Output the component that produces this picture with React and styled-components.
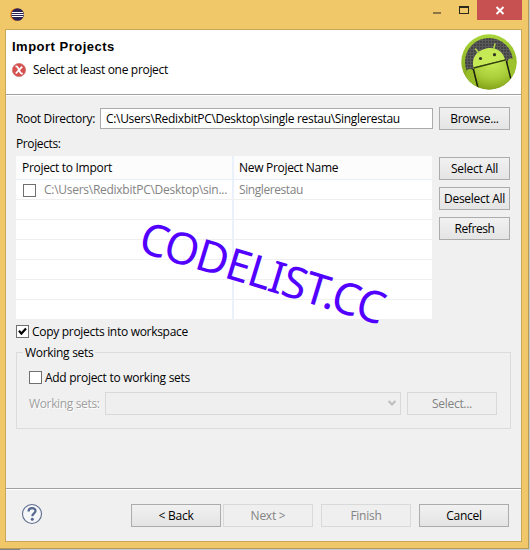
import React from "react";
import styled, { createGlobalStyle } from "styled-components";

const Global = createGlobalStyle`
  *, *::before, *::after { box-sizing: border-box; }
  body { margin: 0; overflow: hidden; font: 12px/16px "Open Sans", "Noto Sans", sans-serif; color: #000; }
`;

const Desktop = styled.div`
  width: 530px; height: 550px; padding: 0 1px 1px 0;
  background: linear-gradient(90deg, #858585 20px, #c3cdd0 20px);
`;
const Window = styled.div`
  position: relative; width: 529px; height: 549px;
  background: #f0c869; border: solid #b69a55; border-width: 0 1px 1px 0;
  padding: 0 6px 6px 5px;
`;
const TitleBar = styled.div`
  height: 29px; display: flex; align-items: flex-start;
`;
const AppIcon = styled.svg`
  width: 14px; height: 14px; margin: 8px 0 0 5px; flex: none;
`;
const WindowControls = styled.div`
  display: flex; margin-left: auto; height: 20px;
`;
const Control = styled.div`
  width: ${p => p.$w}px; height: 20px; background: ${p => p.$bg || "transparent"};
  svg { display: block; width: 100%; height: 100%; }
`;
const Client = styled.div`
  width: 517px; height: 513px; border: 1px solid #c9a757; background: #f0f0f0;
  display: flex; flex-direction: column;
`;
const Header = styled.header`
  height: 66px; flex: none; background: #fff; border-bottom: 1px solid #fff;
  box-shadow: inset 0 -1px #a0a0a0; display: flex; justify-content: space-between;
  padding: 8px 4px 0 6px;
`;
const Title = styled.h1`
  margin: 0; padding-top: 1px;
  font: bold 13px/16px "Liberation Sans", Arial, sans-serif; letter-spacing: ${p => p.$ls}px;
`;
const Message = styled.div`
  display: flex; align-items: center; gap: 7px; margin-top: 7px;
  svg { width: 14px; height: 14px; }
`;
const Robot = styled.svg`
  width: 56px; height: 56px; margin-top: -4px;
`;
const Text = styled.span`
  white-space: pre; letter-spacing: ${p => p.$ls || 0}px; color: ${p => p.$color || "inherit"};
  text-shadow: ${p => (p.$etched ? "1px 1px #fff" : "none")};
`;
const Body = styled.main`
  flex: 1; padding: 11px 10px 0;
`;
const DirectoryRow = styled.div`
  display: grid; grid-template-columns: 84px 333px 71px; column-gap: 0; align-items: center; height: 23px;
  & > :last-child { margin-left: 6px; }
`;
const Field = styled.div`
  height: 21px; background: #fff; border: 1px solid #ababab; padding: 2px 5px 0; line-height: 16px;
  white-space: nowrap; overflow: hidden;
`;
const Button = styled.button`
  width: ${p => p.$w || 71}px; height: 23px; padding: 0; margin: 0; font: inherit; line-height: 20px;
  display: flex; align-items: center; justify-content: center; flex: none;
  border: 1px solid #acacac; background: linear-gradient(#f1f1f1, #e4e4e4); color: #000;
  &:disabled { border-color: #d9d9d9; background: #efefef; color: #838383; }
`;
const ProjectsLabel = styled.div`
  height: 26px; padding-top: 6px;
`;
const ProjectsArea = styled.div`
  display: flex; gap: 7px;
`;
const ButtonColumn = styled.div`
  display: flex; flex-direction: column; gap: 7px; padding-top: 1px;
`;
const Table = styled.div`
  width: 416px; height: 163px; background: #fff; overflow: hidden;
`;
const TableRow = styled.div`
  display: grid; grid-template-columns: 218px 198px; height: ${p => (p.$head ? 24 : 20)}px;
  background: ${p => (p.$head ? "#fcfcfc" : "#fff")};
  border-bottom: 1px solid ${p => (p.$head ? "#e9effa" : p.$last ? "#fff" : "#efefef")};
`;
const Cell = styled.div`
  display: flex; align-items: center; height: 100%; padding-left: ${p => p.$pad}px; white-space: nowrap;
  border-right: ${p => (p.$divider ? "2px solid #ebf1fb" : "0")};
`;
const ProjectCell = styled(Cell)`
  gap: 8px; padding-top: 1px;
`;
const Box = styled.span`
  width: 13px; height: 13px; flex: none; border: 1px solid #707070; background: #fff;
  svg { display: block; width: 11px; height: 11px; }
`;
const CheckRow = styled.label`
  display: flex; align-items: center; gap: 3px; height: 17px; margin-top: ${p => p.$top || 0}px;
`;
const Group = styled.fieldset`
  margin: 4px 0 0; padding: 0 0 0 12px; border: 1px solid #dcdcdc; width: 495px; height: 85px;
  min-width: 0;
`;
const Legend = styled.legend`
  margin-left: -6px; padding: 0 2px; height: 17px; line-height: 18px;
`;
const SetRow = styled.div`
  display: flex; align-items: center; height: 23px; margin-top: 6px;
`;
const SetLabel = styled.div`
  width: 76px;
`;
const Combo = styled.div`
  width: 296px; height: 23px; border: 1px solid #d9d9d9; background: #efefef; margin-right: 6px;
  display: flex; justify-content: flex-end; align-items: center; padding-right: 4px;
`;
const Footer = styled.footer`
  height: 53px; flex: none; border-top: 1px solid #a0a0a0; box-shadow: inset 0 1px #fff;
  display: flex; align-items: flex-start; padding: 15px 12px 0 15px;
`;
const HelpIcon = styled.svg`
  width: 22px; height: 22px; margin-top: -1px;
`;
const Actions = styled.div`
  display: flex; gap: 8px; margin-left: auto;
`;
const Pair = styled.div`
  display: flex; gap: 2px;
`;
const Watermark = styled.div`
  position: absolute; left: 137px; top: 205px; transform-origin: 0 45px; transform: rotate(16.9deg);
  font: 44px/58px "Noto Sans", sans-serif; letter-spacing: -1.2px; color: #5200ff; white-space: nowrap;
  pointer-events: none;
`;

const ROWS = [0, 1, 2, 3, 4];

function AndroidBadge() {
  return (
    <Robot viewBox="0 0 56 56">
      <defs>
        <linearGradient id="rim" x1="0" y1="0" x2="0" y2="1">
          <stop offset="0" stopColor="#a9d53a" /><stop offset="1" stopColor="#7d9f16" />
        </linearGradient>
        <radialGradient id="skin" cx=".5" cy=".1" r=".9">
          <stop offset="0" stopColor="#c5ea56" /><stop offset=".55" stopColor="#a9cd38" /><stop offset="1" stopColor="#7f9f15" />
        </radialGradient>
        <pattern id="mesh" width="3" height="3" patternUnits="userSpaceOnUse">
          <rect width="3" height="3" fill="#434343" /><path d="M0 .5H3M.5 0V3" stroke="#5a5a5a" strokeWidth="1" />
        </pattern>
        <clipPath id="disc"><circle cx="28" cy="28" r="27.3" /></clipPath>
      </defs>
      <circle cx="28" cy="28" r="27.7" fill="url(#rim)" />
      <circle cx="28" cy="28" r="24" fill="url(#mesh)" />
      <g clipPath="url(#disc)">
        <path d="M12 34 L45 26 L51 49 Q40 57 27 57 L17 54Z" fill="url(#skin)" />
        <path d="M12.4 33.5 C10 22 17 16.5 25 14.5 C34 12.5 42 17 44 25.5Z" fill="#c5ea56" />
        <path d="M18 19 L14.500 15 M32.500 15 L34 10" stroke="#b5d84a" strokeWidth="1.5" strokeLinecap="round" />
        <path d="M5.500 38 Q6 35 9 35 Q12 35 12.500 38 L17 56 L4 50Z" fill="#98bd29" />
        <path d="M46.500 29 Q46 25 49.500 24.500 Q53 24 54 28 L57 40 L50 48Z" fill="#9cc32d" />
        <path d="M12.500 34 L45 25.800" stroke="#33400b" strokeWidth="1.3" />
        <path d="M12.400 35 L17 54 M45.300 27 L50 45.500" stroke="#1f230d" strokeWidth="1.5" />
        <circle cx="19.500" cy="24.500" r="1.6" fill="#303525" /><circle cx="33.500" cy="20.700" r="1.6" fill="#303525" />
      </g>
    </Robot>
  );
}

export default function App() {
  return (
    <Desktop>
      <Global />
      <Window>
        <TitleBar>
          <AppIcon viewBox="0 0 14 14">
            <circle cx="6.3" cy="6.5" r="6.3" fill="#f48a1c" />
            <circle cx="7.6" cy="6.5" r="6.3" fill="#2c2355" />
            <path d="M2 4.5H13M1.600 6.500H13.600M2 8.500H13" stroke="#fff" strokeWidth="1" />
          </AppIcon>
          <WindowControls>
            <Control $w={27}><svg viewBox="0 0 27 20"><path d="M10 12h8v2h-8z" fill="#8c7648" /></svg></Control>
            <Control $w={27}><svg viewBox="0 0 27 20"><path d="M9 6h10v8H9zM10 8v5h8V8z" fill="#2b271c" fillRule="evenodd" /></svg></Control>
            <Control $w={45} $bg="#c75050"><svg viewBox="0 0 45 20"><path d="M19.500 7l7 7M26.500 7l-7 7" stroke="#fff" strokeWidth="1.9" /></svg></Control>
          </WindowControls>
        </TitleBar>
        <Client>
          <Header>
            <div>
              <Title $ls={0.5}>Import Projects</Title>
              <Message>
                <svg viewBox="0 0 14 14">
                  <circle cx="7" cy="7" r="6.6" fill="#d75050" stroke="#cf7b78" strokeWidth=".8" />
                  <path d="M3.500 3.500Q5.200 3 6 5L8 9Q8.800 11 10.700 10.300M10.200 3.600L3.800 10.500" fill="none" stroke="#fff" strokeWidth="1.8" />
                </svg>
                <Text $ls={-0.32}>Select at least one project</Text>
              </Message>
            </div>
            <AndroidBadge />
          </Header>
          <Body>
            <DirectoryRow>
              <Text $ls={-0.33}>Root Directory:</Text>
              <Field><Text $ls={-0.32}>{"C:\\Users\\RedixbitPC\\Desktop\\single restau\\Singlerestau"}</Text></Field>
              <Button><Text $ls={-0.3}>Browse...</Text></Button>
            </DirectoryRow>
            <ProjectsLabel><Text $ls={-0.38}>Projects:</Text></ProjectsLabel>
            <ProjectsArea>
              <Table>
                <TableRow $head>
                  <Cell $pad={6} $divider><Text $ls={-0.3}>Project to Import</Text></Cell>
                  <Cell $pad={5}><Text $ls={-0.3}>New Project Name</Text></Cell>
                </TableRow>
                <TableRow>
                  <ProjectCell $pad={7} $divider>
                    <Box />
                    <Text $ls={-0.27} $color="#838383">{"C:\\Users\\RedixbitPC\\Desktop\\sin..."}</Text>
                  </ProjectCell>
                  <Cell $pad={5}><Text $ls={-0.42} $color="#838383">Singlerestau</Text></Cell>
                </TableRow>
                {ROWS.map(i => <TableRow key={i}><Cell $divider /><Cell /></TableRow>)}
                <TableRow $last><Cell $divider /><Cell /></TableRow>
              </Table>
              <ButtonColumn>
                <Button><Text $ls={-0.3}>Select All</Text></Button>
                <Button><Text $ls={-0.3}>Deselect All</Text></Button>
                <Button><Text $ls={-0.4}>Refresh</Text></Button>
              </ButtonColumn>
            </ProjectsArea>
            <CheckRow $top={4}>
              <Box><svg viewBox="0 0 11 11"><path d="M2 4.800L4.400 7.600L9 2.500" fill="none" stroke="#000" strokeWidth="2.2" /></svg></Box>
              <Text $ls={-0.3}>Copy projects into workspace</Text>
            </CheckRow>
            <Group>
              <Legend><Text $ls={-0.3}>Working sets</Text></Legend>
              <CheckRow $top={8}><Box /><Text $ls={-0.28}>Add project to working sets</Text></CheckRow>
              <SetRow>
                <SetLabel><Text $ls={-0.35} $color="#a0a0a0" $etched>Working sets:</Text></SetLabel>
                <Combo><svg width="8" height="7" viewBox="0 0 8 7"><path d="M.7 1L4 4.600L7.300 1" fill="none" stroke="#bcbcbc" strokeWidth="2" /></svg></Combo>
                <Button $w={90} disabled><Text $ls={-0.3}>Select...</Text></Button>
              </SetRow>
            </Group>
          </Body>
          <Footer>
            <HelpIcon viewBox="0 0 22 22">
              <circle cx="11" cy="11" r="9.5" fill="#f5f6f8" stroke="#5d6d8e" strokeWidth="1.1" />
              <path d="M7.500 8.500C7.500 4 14.700 4.200 14.500 8C14.400 10.300 11.300 10.400 11.300 13.300" fill="none" stroke="#54678d" strokeWidth="2.2" />
              <circle cx="11.300" cy="16.300" r="1.5" fill="#54678d" />
            </HelpIcon>
            <Actions>
              <Pair>
                <Button $w={90}><Text $ls={-0.25}>&lt; Back</Text></Button>
                <Button $w={90} disabled><Text $ls={-0.25}>Next &gt;</Text></Button>
              </Pair>
              <Button $w={90} disabled><Text $ls={-0.25}>Finish</Text></Button>
              <Button $w={90}><Text $ls={-0.25}>Cancel</Text></Button>
            </Actions>
          </Footer>
        </Client>
        <Watermark>CODELIST.CC</Watermark>
      </Window>
    </Desktop>
  );
}
